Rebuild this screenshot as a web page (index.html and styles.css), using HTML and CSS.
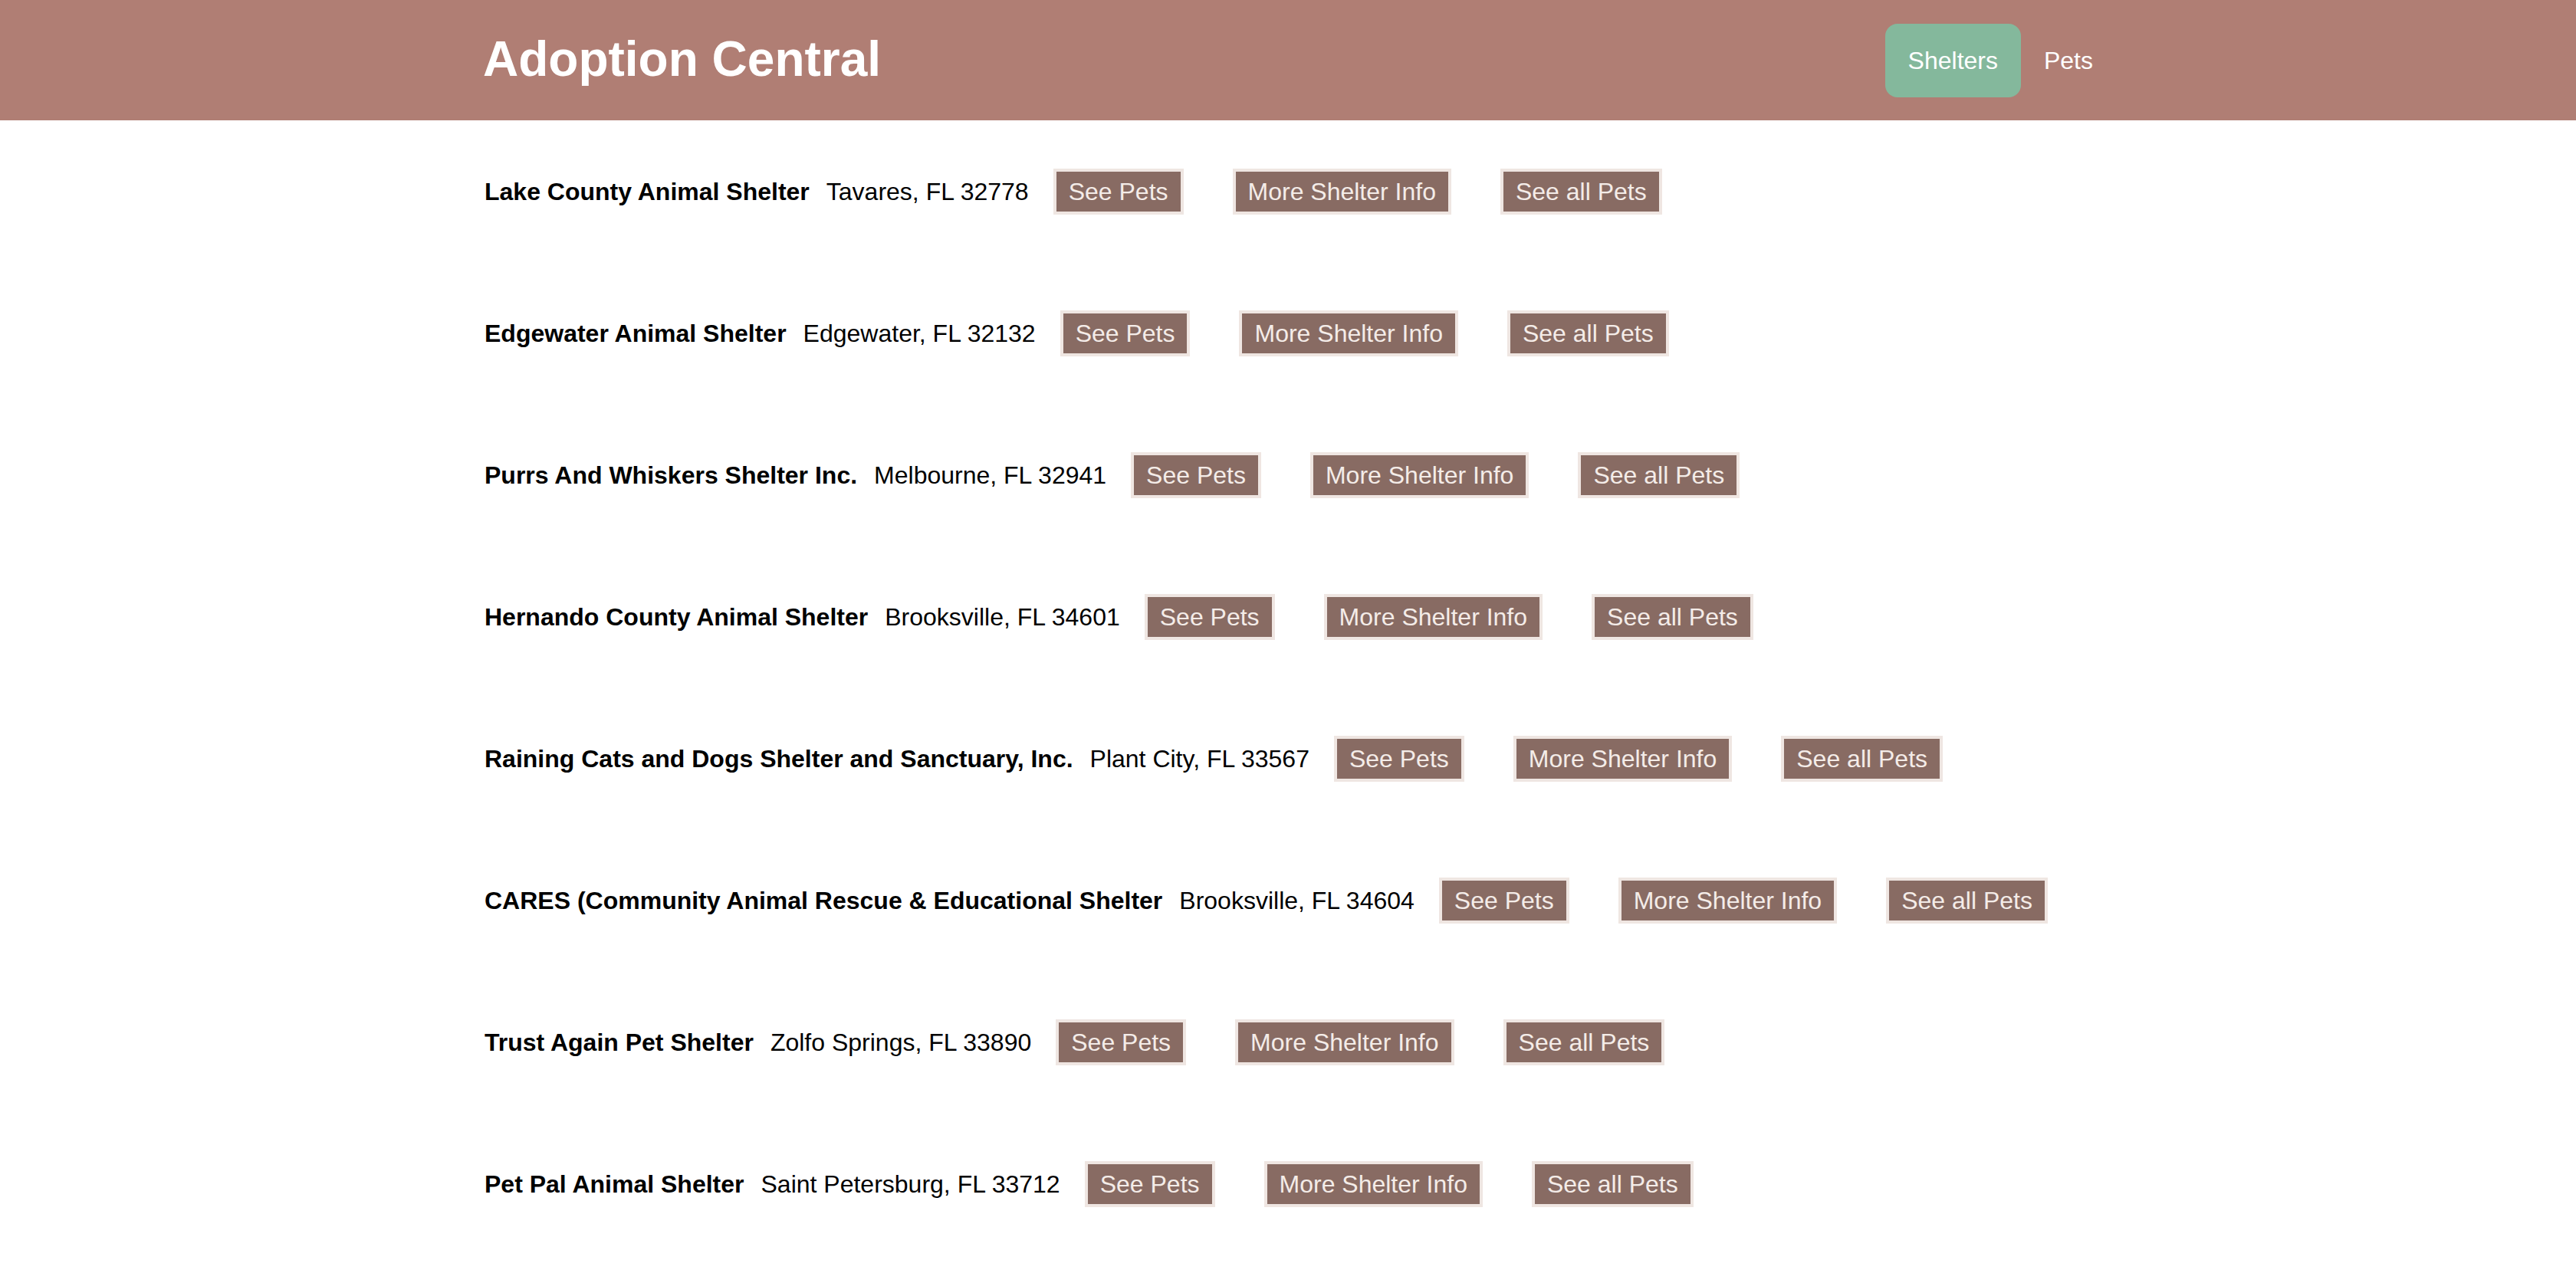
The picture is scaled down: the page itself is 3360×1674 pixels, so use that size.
FILE: index.html
```html
<!DOCTYPE html>
<html lang="en">
<head>
<meta charset="utf-8">
<title>Adoption Central</title>
<link rel="stylesheet" href="styles.css">
</head>
<body>
<header class="topbar">
  <div class="topbar-inner">
    <h1 class="brand">Adoption Central</h1>
    <nav class="nav">
      <a class="nav-link active" href="#">Shelters</a>
      <a class="nav-link" href="#">Pets</a>
    </nav>
  </div>
</header>
<main class="list">
  <div class="shelter">
    <span class="name">Lake County Animal Shelter</span><span class="addr">Tavares, FL 32778</span>
    <button class="btn">See Pets</button><button class="btn">More Shelter Info</button><button class="btn">See all Pets</button>
  </div>
  <div class="shelter">
    <span class="name">Edgewater Animal Shelter</span><span class="addr">Edgewater, FL 32132</span>
    <button class="btn">See Pets</button><button class="btn">More Shelter Info</button><button class="btn">See all Pets</button>
  </div>
  <div class="shelter">
    <span class="name">Purrs And Whiskers Shelter Inc.</span><span class="addr">Melbourne, FL 32941</span>
    <button class="btn">See Pets</button><button class="btn">More Shelter Info</button><button class="btn">See all Pets</button>
  </div>
  <div class="shelter">
    <span class="name">Hernando County Animal Shelter</span><span class="addr">Brooksville, FL 34601</span>
    <button class="btn">See Pets</button><button class="btn">More Shelter Info</button><button class="btn">See all Pets</button>
  </div>
  <div class="shelter">
    <span class="name">Raining Cats and Dogs Shelter and Sanctuary, Inc.</span><span class="addr">Plant City, FL 33567</span>
    <button class="btn">See Pets</button><button class="btn">More Shelter Info</button><button class="btn">See all Pets</button>
  </div>
  <div class="shelter">
    <span class="name">CARES (Community Animal Rescue &amp; Educational Shelter</span><span class="addr">Brooksville, FL 34604</span>
    <button class="btn">See Pets</button><button class="btn">More Shelter Info</button><button class="btn">See all Pets</button>
  </div>
  <div class="shelter">
    <span class="name">Trust Again Pet Shelter</span><span class="addr">Zolfo Springs, FL 33890</span>
    <button class="btn">See Pets</button><button class="btn">More Shelter Info</button><button class="btn">See all Pets</button>
  </div>
  <div class="shelter">
    <span class="name">Pet Pal Animal Shelter</span><span class="addr">Saint Petersburg, FL 33712</span>
    <button class="btn">See Pets</button><button class="btn">More Shelter Info</button><button class="btn">See all Pets</button>
  </div>
</main>
</body>
</html>
```

FILE: styles.css
```css
html, body {
  margin: 0;
  padding: 0;
  background: #ffffff;
  font-family: "Liberation Sans", Arial, sans-serif;
  color: #000;
}

.topbar {
  background: #b07e74;
  height: 157px;
}

.topbar-inner {
  display: flex;
  align-items: center;
  justify-content: space-between;
  height: 100%;
  padding: 0 600px 0 630px;
}

.brand {
  margin: 0 0 3px 0;
  font-size: 64px;
  line-height: 74px;
  font-weight: bold;
  color: #ffffff;
}

.nav {
  display: flex;
  align-items: center;
}

.nav-link {
  font-size: 32px;
  line-height: 36px;
  padding: 30px 30px;
  color: #ffffff;
  text-decoration: none;
  border-radius: 16px;
}

.nav-link.active {
  background: #84b89c;
}

.list {
  display: flex;
  flex-direction: column;
  gap: 125px;
  padding: 63px 0 40px 632px;
}

.shelter {
  display: flex;
  align-items: center;
  height: 60px;
  font-size: 32px;
  white-space: nowrap;
}

.name {
  font-weight: bold;
  margin-right: 22px;
}

.addr {
  margin-right: 32px;
}

.btn {
  font-family: "Liberation Sans", Arial, sans-serif;
  font-size: 32px;
  line-height: 36px;
  padding: 8px 16px;
  margin: 0 64px 0 0;
  background: #886b63;
  color: #f4ece8;
  border: 4px solid #efe6e2;
  border-radius: 0;
  cursor: pointer;
}
```
